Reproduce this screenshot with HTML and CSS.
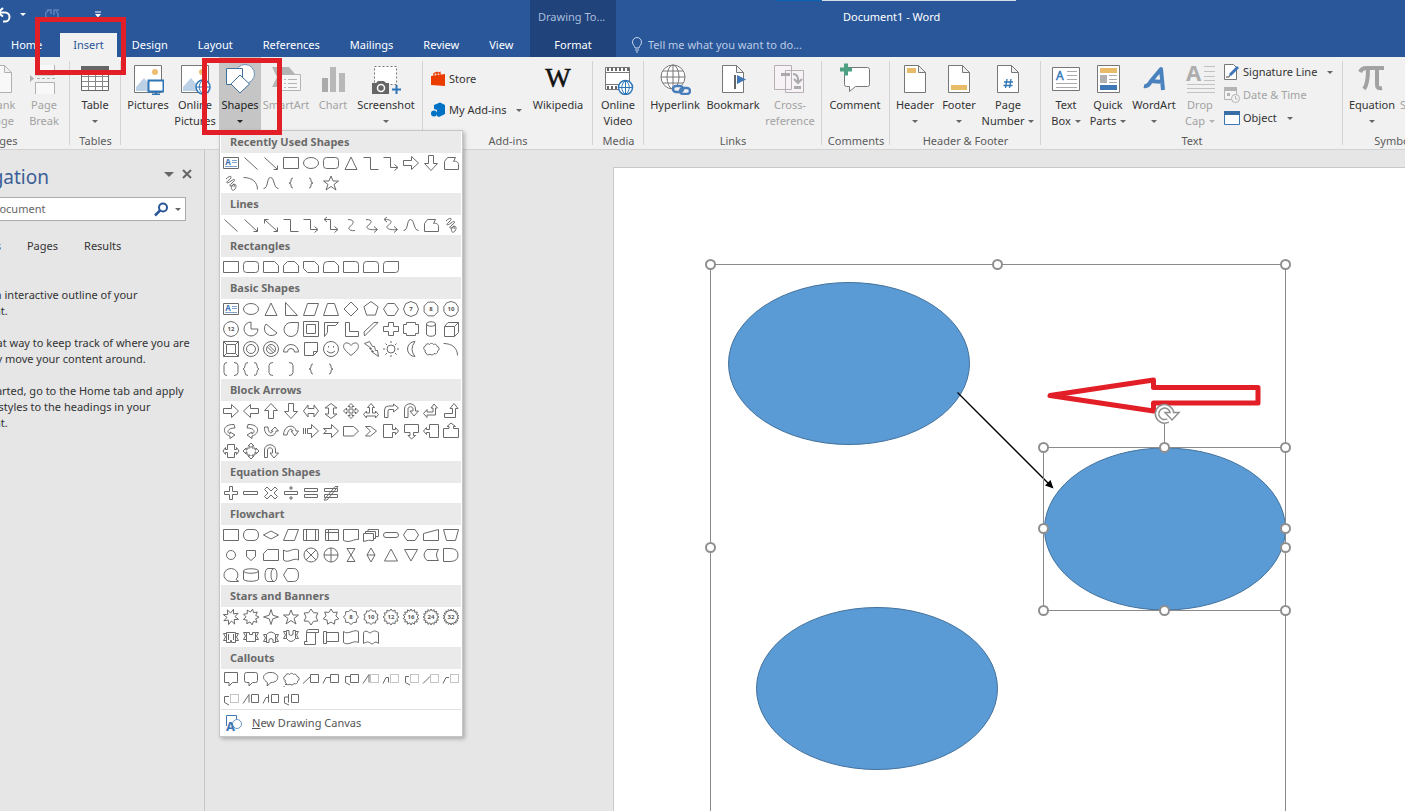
FILE: index.html
```html
<!DOCTYPE html>
<html lang="en">
<head>
<meta charset="utf-8">
<title>Document1 - Word</title>
<link rel="stylesheet" href="styles.css">
</head>
<body>
<header class="top">
  <div class="top-left">
    <div class="qat">
      <button class="qat-btn undo" aria-label="Undo"><svg width="16" height="16" viewBox="0 0 16 16"><path d="M7 1L2 5.500l5 4M2 5.500h7a4.500 4.500 0 0 1 0 9H7" fill="none" stroke="#fff" stroke-width="2"/></svg></button>
      <i class="caret light"></i>
      <button class="qat-btn redo" aria-label="Repeat"><svg width="16" height="16" viewBox="0 0 16 16"><path d="M6 3a5 5 0 0 0-1 10M9 13a5 5 0 0 0 2-9M9 8V3h5M2 3h4v4" fill="none" stroke="#5f81ba" stroke-width="1.500"/></svg></button>
      <button class="qat-btn more" aria-label="Customize"><svg width="8" height="8" viewBox="0 0 8 8"><path d="M1 1h6" stroke="#fff"/><path d="M1 3h6L4 6.500z" fill="#fff"/></svg></button>
    </div>
    <nav class="tabs">
      <button class="tab home">Home</button><button class="tab active">Insert</button><button class="tab">Design</button><button class="tab">Layout</button><button class="tab">References</button><button class="tab">Mailings</button><button class="tab">Review</button><button class="tab">View</button>
    </nav>
  </div>
  <div class="context">
    <span class="context-title">Drawing To...</span>
    <button class="tab">Format</button>
  </div>
  <div class="top-right">
    <div class="doc-title">Document1 - Word</div>
    <label class="tell">
      <svg width="12" height="16" viewBox="0 0 12 16"><path d="M4 11C4 9 1.500 8 1.500 5a4.500 4.500 0 0 1 9 0c0 3-2.500 4-2.500 6zM4 13h4M5 15h2" fill="none" stroke="#c9d6ec"/></svg>
      <input type="text" placeholder="Tell me what you want to do..." aria-label="Tell me what you want to do">
    </label>
  </div>
</header>

<section class="ribbon" aria-label="Insert">
  <div class="group g-pages">
    <div class="cmds">
      <button class="cmd w40 off"><svg class="ico" viewBox="0 0 32 32"><path d="M6.500 2.500h13l7 7v20h-20zM19.500 2.500v7h7" fill="#f8f8f8" stroke="#b0b0b0"/></svg><span>Blank<br>Page</span></button>
      <button class="cmd w46 off"><svg class="ico" viewBox="0 0 32 32"><path d="M7.500 2v10h19V2M7.500 31V19.500h19V31" fill="#f8f8f8" stroke="#b0b0b0"/><path d="M9 15.500h20" stroke="#b0b0b0" stroke-dasharray="3 2"/><path d="M2 12l4 3.500L2 19z" fill="#b0b0b0"/></svg><span>Page<br>Break</span></button>
    </div>
    <div class="group-name">Pages</div>
  </div>
  <div class="group g-51">
    <div class="cmds">
      <button class="cmd w50"><svg class="ico" viewBox="0 0 32 32"><path d="M2.500 3.500h27v24h-27z" fill="#fff" stroke="#666"/><path d="M2 3h28v5H2z" fill="#666"/><path d="M3 13.500h26M3 18.500h26M3 23.500h26M9.500 8v19M16.500 8v19M23.500 8v19" stroke="#888" fill="none"/></svg><span>Table</span><i class="caret"></i></button>
    </div>
    <div class="group-name">Tables</div>
  </div>
  <div class="group g-302 pad4">
    <div class="cmds">
      <button class="cmd w46"><svg class="ico" viewBox="0 0 32 32"><path d="M2.500 2.500h27v27h-27z" fill="#fff" stroke="#777"/><path d="M4 28V24l8-9 7 8v5z" fill="#bcd0e6"/><circle cx="23" cy="9" r="3" fill="#ecbe72"/><path d="M16.500 17.500h15v11h-15z" fill="#fff" stroke="#2e75b6" stroke-width="2"/><path d="M20 31.500h8M24 29v3" stroke="#2e75b6" stroke-width="2"/></svg><span>Pictures</span></button>
      <button class="cmd w48"><svg class="ico" viewBox="0 0 32 32"><path d="M2.500 2.500h27v27h-27z" fill="#fff" stroke="#777"/><path d="M4 28V24l8-9 7 8v5z" fill="#bcd0e6"/><circle cx="23" cy="9" r="3" fill="#ecbe72"/><circle cx="24" cy="24" r="7" fill="#fff" stroke="#2e75b6" stroke-width="1.500"/><path d="M17 24h14M24 17v14M24 17c-5 4-5 10 0 14c5-4 5-10 0-14" fill="none" stroke="#2e75b6"/></svg><span>Online<br>Pictures</span></button>
      <button class="cmd w42 pressed"><svg class="ico" viewBox="0 0 32 32"><circle cx="21" cy="11" r="9.500" fill="#fff" stroke="#6c94bd"/><path d="M2.500 5.500h16v16h-16z" fill="#fff" stroke="#3f719f"/><path d="M16 12l9.500 9L16 30l-9-9z" fill="#fff" stroke="#3f719f"/></svg><span>Shapes</span><i class="caret dark"></i></button>
      <button class="cmd w50 off"><svg class="ico" viewBox="0 0 32 32"><path d="M2 4h17l6 7h-6l-6 6-4 7H2l5-10z" fill="#b4b4b4"/><path d="M10.500 11.500h20v16h-20z" fill="#f6f6f6" stroke="#b4b4b4"/><path d="M14 16.500h2m2 0h9m-13 4h2m2 0h9m-13 4h2m2 0h9" stroke="#b4b4b4"/></svg><span>SmartArt</span></button>
      <button class="cmd w44 off"><svg class="ico" viewBox="0 0 32 32"><path d="M5 15h6v14H5z" fill="#aaa"/><path d="M13 4h6v25h-6zM22 10h6v19h-6z" fill="#b8b8b8"/></svg><span>Chart</span></button>
      <button class="cmd w62"><svg class="ico" viewBox="0 0 32 32"><path d="M4.500 3.500h22v18h-22z" fill="#fff" stroke="#777" stroke-dasharray="2 2"/><path d="M2 20h4l2-2h6l2 2h3v11H2z" fill="#666"/><circle cx="11" cy="25" r="3.500" fill="#666" stroke="#fff" stroke-width="1.500"/><path d="M22 26.500h9M26.500 22v9" stroke="#2e75b6" stroke-width="2"/></svg><span>Screenshot</span><i class="caret"></i></button>
    </div>
    <div class="group-name"></div>
  </div>
  <div class="group g-addins pad4">
    <div class="cmds">
      <div class="stack two w102">
        <button class="row"><svg width="16" height="16" viewBox="0 0 16 16"><path d="M1 5l14-2v12L1 14z" fill="#eb3c00"/><path d="M4 6V2.500l3-1V5M7 2.500l3-1V5" fill="none" stroke="#eb3c00" stroke-width="1.300"/></svg>Store</button>
        <button class="row"><svg width="16" height="16" viewBox="0 0 16 16"><path d="M4 3l6-2.500L15 3v9l-6 3-2-1V8L4 7z" fill="#0072c6"/><circle cx="4" cy="11.500" r="3" fill="#0072c6"/></svg>My Add-ins<i class="caret"></i></button>
      </div>
      <button class="cmd w58"><svg class="ico" viewBox="0 0 32 32"><text x="16" y="24" text-anchor="middle" class="wiki">W</text></svg><span>Wikipedia</span></button>
    </div>
    <div class="group-name">Add-ins</div>
  </div>
  <div class="group g-51">
    <div class="cmds">
      <button class="cmd w50"><svg class="ico" viewBox="0 0 32 32"><path d="M3.500 4.500h24v22h-24z" fill="#fff" stroke="#777"/><path d="M5 6.500h22M5 24.500h13" stroke="#666" stroke-width="3" stroke-dasharray="2 2"/><path d="M3 9.500h25M3 21.500h15" stroke="#777"/><circle cx="23.500" cy="24.500" r="7" fill="#fff" stroke="#2e75b6" stroke-width="1.500"/><path d="M16.500 24.500h14M23.500 17.500v14M23.500 17.500c-5 4-5 10 0 14c5-4 5-10 0-14" fill="none" stroke="#2e75b6"/></svg><span>Online<br>Video</span></button>
    </div>
    <div class="group-name">Media</div>
  </div>
  <div class="group g-links pad2">
    <div class="cmds">
      <button class="cmd w58"><svg class="ico" viewBox="0 0 32 32"><g fill="none" stroke="#777"><circle cx="14" cy="14" r="12" fill="#fff"/><ellipse cx="14" cy="14" rx="6" ry="12"/><path d="M2 14h24M14 2v24M4 8h20M4 20h20"/></g><path d="M14 22h18v10H14z" fill="#f1f1f1"/><g fill="none" stroke="#4a7ebb" stroke-width="2.500"><rect x="14" y="23" width="10" height="6" rx="3"/><rect x="21" y="25" width="10" height="6" rx="3"/></g></svg><span>Hyperlink</span></button>
      <button class="cmd w58"><svg class="ico" viewBox="0 0 32 32"><path d="M5.500 2.500h14l7 7v20h-21zM19.500 2.500v7h7" fill="#fff" stroke="#777"/><path d="M18 12v14" stroke="#666" stroke-width="2"/><path d="M20 12l9 4.500-9 4.500z" fill="#3f76b5"/></svg><span>Bookmark</span></button>
      <button class="cmd w56 off"><svg class="ico" viewBox="0 0 32 32"><path d="M11.500 7.500h18v22h-18zM.5 2.500h17v24H.5z" fill="#f6f2f6" stroke="#b6b0b6"/><path d="M7 11.500h9M20 24.500h7" stroke="#aaa" stroke-width="3"/><path d="M19 11q6 0 5 9m-4-4l4 4 4-4" fill="none" stroke="#aaa" stroke-width="2"/></svg><span>Cross-<br>reference</span></button>
    </div>
    <div class="group-name">Links</div>
  </div>
  <div class="group g-68">
    <div class="cmds">
      <button class="cmd w66"><svg class="ico" viewBox="0 0 32 32"><path d="M5.500 4.500h23q2 0 2 2v15q0 2-2 2h-12l-6 5v-5h-3q-2 0-2-2z" fill="#fff" stroke="#777"/><path d="M1 6.500h12M7 .5v12" stroke="#4f9f83" stroke-width="4"/></svg><span>Comment</span></button>
    </div>
    <div class="group-name">Comments</div>
  </div>
  <div class="group g-151 pad2">
    <div class="cmds">
      <button class="cmd w46"><svg class="ico" viewBox="0 0 32 32"><path d="M5.500 2.500h14l7 7v20h-21zM19.500 2.500v7h7" fill="#fff" stroke="#777"/><path d="M8 5h9v5H8z" fill="#e8bb69"/></svg><span>Header</span><i class="caret"></i></button>
      <button class="cmd w42"><svg class="ico" viewBox="0 0 32 32"><path d="M5.500 2.500h14l7 7v20h-21zM19.500 2.500v7h7" fill="#fff" stroke="#777"/><path d="M8 22h16v5H8z" fill="#e8bb69"/></svg><span>Footer</span><i class="caret"></i></button>
      <button class="cmd w56"><svg class="ico" viewBox="0 0 32 32"><path d="M5.500 2.500h14l7 7v20h-21zM19.500 2.500v7h7" fill="#fff" stroke="#777"/><path d="M15 16l-1.500 9M19 16l-1.500 9M12 19h9M11.500 22.500h9" fill="none" stroke="#2e75b6" stroke-width="1.300"/></svg><span>Page<br>Number<i class="caret inl"></i></span></button>
    </div>
    <div class="group-name">Header &amp; Footer</div>
  </div>
  <div class="group g-302 pad4">
    <div class="cmds">
      <button class="cmd w42"><svg class="ico" viewBox="0 0 32 32"><path d="M2.500 4.500h27v23h-27z" fill="#fff" stroke="#777"/><text x="6" y="17" class="ico-a">A</text><path d="M17 8.500h10M17 12.500h10M17 16.500h10M6 20.500h21M6 24.500h21" stroke="#aaa"/></svg><span>Text<br>Box<i class="caret inl"></i></span></button>
      <button class="cmd w42"><svg class="ico" viewBox="0 0 32 32"><path d="M5.500 2.500h22v27h-22z" fill="#fff" stroke="#777"/><path d="M8 5h17v5H8z" fill="#e8bb69"/><path d="M8 22h17v5H8z" fill="#3f76b5"/><path d="M8 12h7v8H8z" fill="#b0b0b0"/><path d="M17 12.500h8M17 16.500h8M17 19.500h8" stroke="#aaa"/></svg><span>Quick<br>Parts<i class="caret inl"></i></span></button>
      <button class="cmd w50"><svg class="ico" viewBox="0 0 32 32"><path d="M6 23q4 1 7-5L23 6l2 21M12 18l14 1" fill="none" stroke="#4a82bd" stroke-width="4" stroke-linejoin="round"/></svg><span>WordArt</span><i class="caret"></i></button>
      <button class="cmd w42 off"><svg class="ico" viewBox="0 0 32 32"><text x="2" y="18" class="drop-a">A</text><path d="M20 3.500h11M20 8.500h11M20 13.500h11M20 17.500h11M3 21.500h28M3 25.500h28M3 29.500h28" stroke="#c2c2c2"/></svg><span>Drop<br>Cap<i class="caret inl"></i></span></button>
      <div class="stack three">
        <button class="row"><svg width="16" height="16" viewBox="0 0 16 16"><path d="M.5.5h9l3 3v12H.5z" fill="#fff" stroke="#777"/><path d="M6 11l8-8" stroke="#3f76b5" stroke-width="3"/><path d="M2 13h3l1-2" stroke="#444" fill="none"/></svg>Signature Line<i class="caret"></i></button>
        <button class="row off"><svg width="16" height="16" viewBox="0 0 16 16"><path d="M.5.500h12v12H.5z" fill="#f4f4f4" stroke="#b4b4b4"/><path d="M0 0h13v4H0zM3 6h3v3H3z" fill="#b4b4b4"/><circle cx="11.500" cy="11.500" r="4" fill="#f4f4f4" stroke="#b4b4b4"/><path d="M11.500 9v3h2" fill="none" stroke="#b4b4b4"/></svg>Date &amp; Time</button>
        <button class="row"><svg width="16" height="16" viewBox="0 0 16 16"><path d="M.5 1.500h15v13H.5z" fill="#fff" stroke="#3f76b5"/><path d="M0 1h16v4H0z" fill="#3a6ea5"/></svg>Object<i class="caret"></i></button>
      </div>
    </div>
    <div class="group-name">Text</div>
  </div>
  <div class="group g-symbols pad2">
    <div class="cmds">
      <button class="cmd w54"><svg class="ico" viewBox="0 0 32 32"><path d="M4 9q2-4 6-4h18M12 6q0 15-4 20M21 6v16q0 4 5 3" fill="none" stroke="#a2a2a2" stroke-width="4"/></svg><span>Equation</span><i class="caret"></i></button>
      <button class="cmd w50 off sym"><svg class="ico" viewBox="0 0 32 32"></svg><span>Symbol</span></button>
    </div>
    <div class="group-name">Symbols</div>
  </div>
</section>

<main class="work">
  <aside class="nav-pane">
    <div class="nav-inner">
      <div class="nav-head"><h2>Navigation</h2><i class="caret big"></i><button class="close" aria-label="Close"><svg width="10" height="10" viewBox="0 0 10 10"><path d="M1 1l8 8M9 1L1 9" stroke="#666" stroke-width="2"/></svg></button></div>
      <div class="search">
        <input type="text" placeholder="Search document" aria-label="Search document">
        <svg width="15" height="15" viewBox="0 0 15 15"><circle cx="9" cy="5.500" r="4" fill="none" stroke="#2b579a" stroke-width="2"/><path d="M6 8.500L1 13.500" stroke="#2b579a" stroke-width="2.500"/></svg>
        <i class="caret"></i>
      </div>
      <div class="nav-tabs"><button>Headings</button><button>Pages</button><button>Results</button></div>
      <p>Create an interactive outline of your<br>document.</p>
      <p>It's a great way to keep track of where you are<br>or quickly move your content around.</p>
      <p>To get started, go to the Home tab and apply<br>Heading styles to the headings in your<br>document.</p>
    </div>
  </aside>
  <div class="canvas-area">
    <div class="page">
      <svg class="drawing" width="792" height="644" viewBox="613 167 792 644">
        <g fill="#5b9bd5" stroke="#41719c">
          <ellipse cx="849" cy="363.500" rx="120.500" ry="81"/>
          <ellipse cx="877" cy="688.500" rx="120.500" ry="81"/>
          <ellipse cx="1165" cy="529" rx="120.500" ry="81"/>
        </g>
        <path d="M957.500 392.500L1049 484" stroke="#000" stroke-width="1.300"/>
        <path d="M1053.500 488.500l-8.500-3 5.500-5.500z"/>
        <path d="M1050 395.500L1153.500 380v7.500H1258v15.500H1153.500v8z" fill="#fff" stroke="#e21f26" stroke-width="5" stroke-linejoin="round"/>
        <g fill="none" stroke="#8a8a8a">
          <path d="M710.500 820V264.500h575V820M1043.500 447.500h242v163h-242zM1164.500 447V424"/>
        </g>
        <g fill="#fff" stroke="#8f8f8f" stroke-width="2">
          <circle cx="710.500" cy="264.500" r="4.500"/><circle cx="997.500" cy="264.500" r="4.500"/><circle cx="1285.500" cy="264.500" r="4.500"/>
          <circle cx="710.500" cy="547.500" r="4.500"/><circle cx="1285.500" cy="547.500" r="4.500"/>
          <circle cx="1043.500" cy="447.500" r="4.500"/><circle cx="1164.500" cy="447.500" r="4.500"/><circle cx="1285.500" cy="447.500" r="4.500"/>
          <circle cx="1043.500" cy="528.500" r="4.500"/><circle cx="1285.500" cy="528.500" r="4.500"/>
          <circle cx="1043.500" cy="610.500" r="4.500"/><circle cx="1164.500" cy="610.500" r="4.500"/><circle cx="1285.500" cy="610.500" r="4.500"/>
        </g>
        <circle cx="1164.500" cy="414" r="9" fill="#fff"/>
        <g fill="none">
          <path d="M1168 420.500a7.500 7.500 0 1 1 4-7.500" stroke="#8f8f8f" stroke-width="5"/>
          <path d="M1165 412.500h14l-7 7.500z" fill="#fff" stroke="#8f8f8f" stroke-width="1.500"/>
          <path d="M1168 420.500a7.500 7.500 0 1 1 4-7.500v3" stroke="#fff" stroke-width="2"/>
        </g>
      </svg>
    </div>
  </div>
</main>

<div class="menu" id="shapes-menu">
  <div id="gallery"></div>
  <button class="menu-item"><svg width="18" height="18" viewBox="0 0 18 18"><path d="M1.500 12V1.500h10V5" fill="none" stroke="#3f76b5"/><circle cx="12" cy="10" r="4.500" fill="#fff" stroke="#6c94bd"/><text x="1" y="16.500" class="canvas-a">A</text></svg><span><u>N</u>ew Drawing Canvas</span></button>
</div>
<div class="mark mark-tab"></div>
<div class="mark mark-shapes"></div>
<script src="gallery.js"></script>
</body>
</html>
```
FILE: styles.css
```css
* { box-sizing: border-box; }
body {
  margin: 0;
  height: 100vh;
  overflow: hidden;
  position: relative;
  display: flex;
  flex-direction: column;
  background: #e6e6e6;
  color: #333;
  font: 11px/16px "Noto Sans", "Open Sans", sans-serif;
}
button, input {
  font: inherit;
  color: inherit;
  background: none;
  border: 0;
  padding: 0;
  margin: 0;
  outline: 0;
}
button { white-space: nowrap; }
svg { display: block; flex: none; }

.caret {
  display: inline-block;
  flex: none;
  border: 3px solid transparent;
  border-top-color: #666;
  border-bottom: 0;
}
.caret.light { border-top-color: #fff; }
.caret.dark { border-top-color: #222; }
.caret.big { border-width: 5px 5px 0; }
.caret.inl { margin-left: 4px; vertical-align: 2px; }
.off .caret { border-top-color: #b4b4b4; }

/* title bar and tabs */
.top { display: flex; height: 57px; flex: none; background: #2a579a; color: #fff; }
.top-left { width: 530px; flex: none; }
.qat { display: flex; align-items: center; height: 33px; padding-bottom: 4px; }
.undo { margin-left: -4px; }
.qat .caret { margin-left: 8px; }
.redo { margin-left: 19px; }
.more { margin-left: 33px; }
.tabs { display: flex; height: 24px; }
.tab { height: 24px; padding: 0 15px; }
.tab.home { padding: 0 18px 0 11px; }
.tab.active { padding: 0 13px; background: #f1f1f1; color: #2a579a; }
.context {
  width: 86px;
  flex: none;
  background: #20437b;
  display: flex;
  flex-direction: column;
  justify-content: space-between;
}
.context-title { padding: 9px 8px 0; color: #a9bddd; white-space: nowrap; }
.top-right {
  flex: 1;
  background:
    linear-gradient(#d5deec, #d5deec) 206px 0 / 194px 1px no-repeat,
    linear-gradient(#0a64b4, #0a64b4) 160px 0 / 46px 1px no-repeat;
}
.doc-title { height: 33px; line-height: 33px; padding-left: 227px; }
.tell { display: flex; align-items: center; gap: 5px; height: 24px; padding-left: 15px; }
.tell input { width: 200px; }
.tell input::placeholder { color: #bccbe4; opacity: 1; }

/* ribbon */
.ribbon {
  display: flex;
  flex: none;
  height: 93px;
  overflow: hidden;
  background: #f1f1f1;
  border-bottom: 1px solid #d2d2d2;
}
.group {
  flex: none;
  display: flex;
  flex-direction: column;
  justify-content: space-between;
  background: linear-gradient(#d4d4d4, #d4d4d4) right 4px / 1px 84px no-repeat;
}
.g-pages { width: 136px; margin-left: -66px; }
.g-pages .cmds { justify-content: flex-end; padding-right: 3px; }
.g-51 { width: 51px; }
.g-68 { width: 68px; }
.g-151 { width: 151px; }
.g-addins { width: 170px; }
.g-links { width: 178px; }
.g-302 { width: 302px; }
.g-symbols { width: 106px; }
.pad2 .cmds { padding-left: 2px; }
.pad4 .cmds { padding-left: 4px; }
.cmds { display: flex; height: 75px; }
.cmd {
  flex: none;
  display: flex;
  flex-direction: column;
  align-items: center;
  padding-top: 6px;
  height: 73px;
}
.cmd > .caret { margin-top: 7px; }
.cmd.pressed { background: #c5c5c5; color: #222; }
.cmd.sym { align-items: flex-start; padding-left: 1px; }
.ico { width: 32px; height: 32px; margin-bottom: 2px; }
.off { color: #a3a3a3; }
.w40 { width: 40px; }
.w42 { width: 42px; }
.w44 { width: 44px; }
.w46 { width: 46px; }
.w48 { width: 48px; }
.w50 { width: 50px; }
.w54 { width: 54px; }
.w56 { width: 56px; }
.w58 { width: 58px; }
.w62 { width: 62px; }
.w66 { width: 66px; }
.w102 { width: 102px; }
.group-name { height: 16px; text-align: center; color: #5c5c5c; }
.stack { display: flex; flex-direction: column; align-items: flex-start; }
.stack.two { gap: 15px; padding: 14px 0 0 3px; }
.stack.three { gap: 7px; padding: 7px 0 0 3px; }
.row { display: flex; align-items: center; gap: 3px; height: 16px; }
.row .caret { margin-left: 7px; }
.wiki { font: 27px "Liberation Serif", serif; fill: #111; stroke: #111; stroke-width: .5px; }
.ico-a { font: 12px "Noto Sans", sans-serif; fill: #2e75b6; stroke: #2e75b6; stroke-width: .4px; }
.drop-a { font: bold 22px "Noto Sans", sans-serif; fill: #adadad; }
.canvas-a { font: bold 13px "Noto Sans", sans-serif; fill: #3f76b5; }

/* workspace */
.work { flex: 1; display: flex; min-height: 0; }
.nav-pane { width: 205px; flex: none; overflow: hidden; border-right: 1px solid #c6c6c6; }
.nav-inner { margin-left: -48px; }
.nav-head { display: flex; align-items: center; padding: 14px 12px 0 0; height: 40px; }
.nav-head h2 { margin: 0; flex: 1; font-size: 19px; line-height: 26px; font-weight: 400; color: #3b6097; }
.nav-head .caret { margin-bottom: 6px; }
.close { margin: 0 0 6px 8px; }
.search {
  display: flex;
  align-items: center;
  height: 24px;
  margin: 7px 18px 17px 0;
  padding-right: 4px;
  background: #fff;
  border: 1px solid #ababab;
}
.search input { flex: 1; min-width: 0; padding-left: 2px; }
.search input::placeholder { color: #666; opacity: 1; }
.search .caret { margin-left: 6px; }
.nav-tabs { display: flex; gap: 26px; margin-bottom: 33px; }
.nav-tabs button { line-height: 16px; }
.nav-inner p { margin: 0 0 16px; white-space: nowrap; }
.canvas-area { flex: 1; min-width: 0; padding: 17px 0 0 408px; display: flex; }
.page { flex: 1; min-width: 0; overflow: hidden; position: relative; background: #fff; box-shadow: inset 1px 1px #c9c9c9; }
.drawing { position: absolute; left: 0; top: 0; }

/* shapes menu */
.menu {
  position: absolute;
  left: 219px;
  top: 130px;
  width: 244px;
  padding: 0 1px;
  background: #fff;
  border: 1px solid #c6c6c6;
  box-shadow: 2px 2px 4px rgba(0, 0, 0, .25);
}
.menu h3 {
  margin: 0;
  height: 22px;
  padding-left: 9px;
  font-size: 11px;
  line-height: 21px;
  font-weight: 700;
  color: #6a6a6a;
  background: #eaeaea;
}
.shapes { display: grid; grid-template-columns: repeat(12, 20px); }
.shapes button { width: 20px; height: 20px; }
.shapes path { fill: none; stroke: #6a6a6a; }
.shapes .dots { stroke: #8a8a8a; stroke-dasharray: 1 1; }
.shapes .accent { stroke: #7fa3cc; }
.shapes text { font: bold 6px "Noto Sans", sans-serif; fill: #555; text-anchor: middle; }
.shapes .blue { font-size: 8px; fill: #3f76b5; }
.menu-item {
  display: flex;
  align-items: center;
  gap: 9px;
  width: 100%;
  height: 27px;
  padding-left: 4px;
  color: #555;
  border-top: 1px solid #e0e0e0;
}

/* highlight frames */
.mark { position: absolute; border: 5px solid #e21f26; }
.mark-tab { left: 35px; top: 17px; width: 91px; height: 58px; }
.mark-shapes { left: 202px; top: 58px; width: 80px; height: 77px; }
```
FILE: gallery.js
```
// Each shape is drawn in a 20 x 20 cell: [path, text, dotted path]
function star(n, outer, inner, turn) {
  let d = '';
  for (let i = 0; i < n * 2; i++) {
    const r = i % 2 ? inner : outer;
    const a = Math.PI * i / n - Math.PI / 2 + (turn || 0);
    d += (i ? 'L' : 'M') + (10 + r * Math.cos(a)).toFixed(1) + ' ' + (10 + r * Math.sin(a)).toFixed(1);
  }
  return d + 'z';
}
function poly(n, r, turn) {
  let d = '';
  for (let i = 0; i < n; i++) {
    const a = 2 * Math.PI * i / n - Math.PI / 2 + (turn || 0);
    d += (i ? 'L' : 'M') + (10 + r * Math.cos(a)).toFixed(1) + ' ' + (10 + r * Math.sin(a)).toFixed(1);
  }
  return d + 'z';
}
function circle(r) {
  return `M${10 - r} 10a${r} ${r} 0 1 0 ${2 * r} 0a${r} ${r} 0 1 0-${2 * r} 0`;
}

const box = 'M2.5 4.5h15v11h-15z';
const line = 'M3.5 4.500l13 12';
const lineArrow = line + 'm0-4v4h-4';
const lineDouble = lineArrow + 'M3.5 8.500v-4h4';
const oval = 'M2.5 10a7.500 5.500 0 1 0 15 0a7.500 5.500 0 1 0-15 0';
const round = 'M5.5 4.500h9q3 0 3 3v5q0 3-3 3h-9q-3 0-3-3v-5q0-3 3-3z';
const triangle = 'M10 4l6 12.500h-12z';
const elbow = 'M2.5 4.500h7v12h8';
const elbowArrow = 'M2.5 4.500h7v10h7m-3-3l3.500 3-3.500 3';
const elbowDouble = 'M3.500 4.500h6v10h7m-3-3l3.500 3-3.500 3M6 2L3 4.500l3 2.500';
const curve1 = 'M7 4.500c8 0 5 5 2 7s0 5 5 4';
const curve2 = 'M5 4.500c8 0 5 4 2 6s0 5 9 4m-3-3l3.500 3-3.500 3';
const curve3 = 'M4 4.500c9 0 6 4 3 6s0 5 9 4m-3-3l3.500 3-3.500 3M6 2L3 4.500l3 2.500';
const right = 'M2.5 7.500h8v-4l7 6.500-7 6.500v-4h-8z';
const left = 'M17.500 7.500h-8v-4l-7 6.500 7 6.500v-4h8z';
const up = 'M7.500 17.500v-8h-4l6.500-7 6.500 7h-4v8z';
const down = 'M7.500 2.500v8h-4l6.500 7 6.500-7h-4v-8z';
const freeform = 'M3.5 16.500v-8l3-4h8l-2 4c3-1 5 1 5 3v5z';
const scribble = 'M5 6c5-5 7-2 3 1s-2 4 2 1 5-1 1 2-2 4 1 2 4 1 2 4-5 0-3-3 3-3 2 1';
const arc = 'M2.5 4.500c9 0 14 5 14 12';
const wave = 'M2.500 15.500c5 0 3-11 7-11s3 11 8 11';
const braceL = 'M12 5q-2 0-2 2v1q0 2-2 2 2 0 2 2v1q0 2 2 2';
const braceR = 'M8 5q2 0 2 2v1q0 2 2 2-2 0-2 2v1q0 2-2 2';
const diamond = 'M10 3l7 7-7 7-7-7z';
const cloud = 'M4.500 11.500a2.300 2.300 0 0 1 0-4.500a2.300 2.300 0 0 1 4-1.500a2.300 2.300 0 0 1 4 0a2.300 2.300 0 0 1 3.500 2a2.300 2.300 0 0 1 .5 4.500a2.300 2.300 0 0 1-3.500 2.500a2.300 2.300 0 0 1-4 .5a2.300 2.300 0 0 1-4-1a1.600 1.600 0 0 1-.5-2.500z';
const star5 = 'M10 3l2 5h5.500l-4.500 3.500 2 5.500-5-3.500-5 3.500 2-5.500-4.500-3.500h5.500z';
const textBox = [box, 'A', ''];
const note1 = 'M9.500 5.500h8v8h-8z';
const note2 = 'M10.500 5.500h7v8h-7z';

const sections = [
  ['Recently Used Shapes', [textBox, [line], [lineArrow], [box], [oval], [round], [triangle], [elbow], [elbowArrow], [right], [down], [freeform],
    [scribble], [arc], [wave], [braceL], [braceR], [star5]]],
  ['Lines', [[line], [lineArrow], [lineDouble], [elbow], [elbowArrow], [elbowDouble], [curve1], [curve2], [curve3], [wave], [freeform], [scribble]]],
  ['Rectangles', [[box], [round], ['M2.500 4.500h11l4 4v7h-15z'], ['M6.500 4.500h7l4 4v7h-15v-7z'], ['M2.500 4.500h11l4 4v7h-11l-4-4z'], ['M6.500 4.500h7l4 4v7h-15v-7q0-4 4-4z'],
    ['M2.500 4.500h12q3 0 3 3v8h-15z'], ['M5.500 4.500h9q3 0 3 3v8h-15v-8q0-3 3-3z'], ['M5.500 4.500h12v8q0 3-3 3h-12v-8q0-3 3-3z']]],
  ['Basic Shapes', [textBox, [oval], [triangle], ['M4.500 3.500v13h12z'], ['M6.500 4.500h11l-4 12h-11z'], ['M6.500 4.500h7l4 12h-15z'], [diamond], [poly(5, 7.5)],
    ['M6.500 4.500h7l4 5.500-4 6.500h-7L2.500 10z'], [poly(8, 7.5), '7'], [poly(8, 7.5, Math.PI / 8), '8'], [poly(10, 7.5), '10'],
    [poly(12, 7.5), '12'], ['M10 3a7 7 0 1 0 7 7h-7z'], ['M5 5a7 7 0 1 0 11 9z'], ['M17.500 3.500H10a7 7 0 1 0 7 7z'], ['M2.500 2.500h15v15h-15zM5.500 5.500h9v9h-9z'],
    ['M3.500 3.500h14l-3 3h-8v7l-3 4z'], ['M4.500 3.500h4v9h9v5h-13z'], ['M3 13L13 3.500h4L3.500 17z'], ['M7.500 3.500h5v4h5v5h-5v4h-5v-4h-5v-5h5z'],
    ['M5.500 3.500h9v2h3v9h-3v2h-9v-2h-3v-9h3z'], ['M5.500 5v10c0 3 9 3 9 0V5c0-3-9-3-9 0s9 3 9 0'], ['M3.500 7.500h10v10h-10zL7 3.500h10.500L13.500 7.500M17.500 3.500v10l-4 4'],
    ['M2.500 2.500h15v15h-15zM5.500 5.500h9v9h-9zM2.500 2.500l3 3M17.500 2.500l-3 3M2.500 17.500l3-3M17.500 17.500l-3-3'], [circle(7.5) + circle(4.5)], [circle(7.5) + circle(4.5) + 'M6.500 8l6 6M8 6.500l6 6'],
    ['M2.500 13a7.500 7.500 0 0 1 15 0h-4a3.500 3.500 0 0 0-7 0z'], ['M3.500 3.500h13v9l-4 4h-9zM16.500 12.500h-4v4'], [circle(7.5) + 'M6 12q4 4 8 0M7.500 7v1.500M12.500 7v1.500'],
    ['M10 16.500C2 10 2 8 3 5.500s5-2 7 1c2-3 6-3.500 7-1s1 4.500-7 11z'], ['M3.500 4.500l5-2 3 5h2l1 4h2l1 6-7-5h2l-4-3h2z'], [circle(4) + 'M10 2v2M10 16v2M2 10h2M16 10h2M4.500 4.500L6 6M14 14l1.500 1.500M15.500 4.500L14 6M6 14l-1.500 1.500'],
    ['M14 2.500a7.500 7.500 0 1 0 0 15q-6-7 0-15z'], [cloud], [arc],
    ['M6 3.500q-3 0-3 3v7q0 3 3 3M13 3.500q4 0 4 3v7q0 3-4 3'], ['M7 3.500q-3 0-3 3 0 3-2 3.500 2 .500 2 3.500 0 3 3 3M13 3.500q3 0 3 3 0 3 2 3.500-2 .500-2 3.500 0 3-3 3'],
    ['M12 3.500q-4 0-4 3v7q0 3 4 3'], ['M8 3.500q4 0 4 3v7q0 3-4 3'], [braceL], [braceR]]],
  ['Block Arrows', [[right], [left], [up], [down], ['M7 4L2.500 10 7 16v-3.500h6V16l4.500-6L13 4v3.500H7z'], ['M4 7l6-4.500L16 7h-3.500v6H16l-6 4.500L4 13h3.500V7z'],
    ['M10 2.500l3 3h-2V9h3.500V7l3 3-3 3v-2H11v3.500h2l-3 3-3-3h2V11H5.500v2l-3-3 3-3v2H9V5.500H7z'], ['M10 2.500l3.500 4h-2V12h3v-2l3 3.500-3 3.500v-2h-9v2l-3-3.500 3-3.500v2h3V6.500h-2z'],
    ['M3.500 16.500V9q0-4 4-4h5V3l5 4-5 4V8.500H8q-1 0-1 2v6z'], ['M3.500 16.500V8c0-7 11-7 11 0v2h3l-4.500 5-4-5h3V8c0-3-5-3-5 0v8.500z'],
    ['M6 8.500l-3.500 4 3.500 4v-2.500h8.500V7h2L13 3 10 7h2v4H6z'], ['M3.500 12.500v4h11v-9h2.500l-4-5-4 5h2.500v5z'],
    ['M13 3.500C1 3 1 13 9 15v2.500l5-3.500-5-3v2C5 11 7 7 14 7z'], ['M7 3.500C19 3 19 13 11 15v2.500L6 14l5-3v2c4-2 2-6-5-6z'],
    ['M3.500 6C3 17 14 17 15 10h2.500L14 6l-4 4h2c-2 4-5 1-5-4z'], ['M2.500 14C3 3 14 3 15 10h2.500L14 15l-4-5h2c-2-4-5-1-6 4z'],
    ['M2.500 7v6M4.500 7v6M6.500 7.500h4v-4l7 6.500-7 6.500v-4h-4z'], ['M2.500 7.500h8v-4l7 6.500-7 6.500v-4h-8l3-2.500z'], ['M2.500 5.500h10l5 4.500-5 5h-10z'], ['M4.500 5.500h5l6 4.500-6 5h-5l5-5z'],
    ['M2.500 3.500h9v5h3v-2l3 3.500-3 3.500v-2h-3v5h-9z'], ['M3.500 3.500h14v8h-5v3h2L10.500 18 7 14.500h2v-3H3.500z'], ['M17.500 3.500h-9v5h-3v-2l-3 3.500 3 3.500v-2h3v5h9z'], ['M2.500 16.500h15v-9h-5v-2h2L10 2 6 5.500h2v2H2.500z'],
    ['M6.500 3.500h7v5h2v-2l2.500 3.500-2.500 3.500v-2h-2v5h-7v-5h-2v2L2 10l2.500-3.500v2h2z'], ['M10 2l3 3h-2v2h3v2h1V7l3 3-3 3v-2h-1v3h-3v1h2l-3 3-3-3h2v-1H6v-3H5v2l-3-3 3-3v2h1V7h3V5H7z'],
    ['M3.500 16.500V9c0-7 11-7 11 0v3h3l-4.500 5-4-5h2.500V9c0-3-5-3-5 0v7.500z']]],
  ['Equation Shapes', [['M8.500 3.500h3v5h5v3h-5v5h-3v-5h-5v-3h5z'], ['M2.500 8.500h14v3h-14z'], ['M6 4l4 4 4-4 2.500 2.500L13 10l3.500 3.500L14 16l-4-4-4 4-2.500-2.500L7 10 3.500 6.500z'],
    ['M3.500 8.500h13v3h-13zM9 4h2v2H9zM9 14h2v2H9z'], ['M3.500 5.500h13v3h-13zM3.500 11.500h13v3h-13z'], ['M3.500 5.500h13v3h-13zM3.500 11.500h13v3h-13zM14 3.500h3L6 17H3z']]],
  ['Flowchart', [[box], ['M7 4.500h6c6 0 6 11 0 11H7c-6 0-6-11 0-11z'], ['M10 6l7.500 4-7.500 4-7.500-4z'], ['M7 4.500h10.500l-4 11h-11z'], [box + 'M5.500 4.500v11M14.500 4.500v11'], ['M4.500 4.500h13v11h-13zM4.500 7.500h13M7.500 4.500v11'],
    ['M2.500 4.500h15v10c-5-1-8 4-15 1z'], ['M2.500 8.500h10v7q-5-1-10 1zM4.500 8.500v-2h10v7h-2M7 6.500v-2h10.500v7h-3'], ['M5 7.500h10q2.500 0 2.500 2.500T15 12.500H5Q2.500 12.500 2.500 10T5 7.500z'],
    ['M6 4.500h8l3.500 5.500-3.500 5.500H6L2.500 10z'], ['M2.500 8.500l15-4v11h-15z'], ['M2.500 4.500h15l-3 11h-9z'],
    [circle(4.5)], ['M5.500 5.500h9v6L10 15.500l-4.500-4z'], ['M6.500 4.500h11v11h-15v-7z'], ['M2.500 5c5 4 9-3 15 0v10c-5-3-10 4-15 0z'], [circle(7) + 'M5 5l10 10M15 5L5 15'], [circle(7) + 'M10 3v14M3 10h14'],
    ['M6 3.500h8l-8 13h8z'], ['M10 3l4 7-4 7-4-7zM6 10h8'], ['M10 4l6.500 12h-13z'], ['M10 16L3.500 4.500h13z'], ['M6 4.500h11.500q-4 5.500 0 11H6q-6-5.500 0-11z'], ['M2.500 3.500H9q8 0 8 6.500t-8 6.500H2.500z'],
    ['M17.500 16.500H10a7 6.500 0 1 1 5-2l3 2'], ['M2.500 6v8c0 3 15 3 15 0V6c0-3-15-3-15 0s15 3 15 0'], ['M7 3.500h6c4 0 4 13 0 13H7c-4 0-4-13 0-13zM13 3.500c-4 0-4 13 0 13'], ['M6.500 3.500h6q5 0 5 6.500t-5 6.500h-6L2.500 10z']]],
  ['Stars and Banners', [[star(8, 8, 4, 0.3)], [star(9, 8, 5, 0.2)], [star(4, 7.5, 2.5)], [star5], [star(6, 8, 5)], [star(7, 8, 5)], [star(8, 7.5, 6), '8'], [star(10, 7.5, 6), '10'],
    [star(12, 8, 6), '12'], [star(14, 8, 6), '16'], [star(16, 8, 6), '24'], [star(18, 8, 6), '32'],
    ['M5.500 13.500h-3l2-3.500-2-3.500h3v-1h9v1h3l-2 3.500 2 3.500h-3M5.500 6v9.500h4v-2h1v2h4V6M7.500 13V7M12.500 13V7'], ['M5.500 5.500h-3l2 3.500-2 3.500h3v2h9v-2h3l-2-3.500 2-3.500h-3M5.500 13V5.500h3v2h3v-2h3V13'], ['M5.500 14.500h-3l2-3.500-2-3.500h3q4.500-5 9 0h3l-2 3.500 2 3.500h-3M5.500 7.500v8h2.500v-3q2-2 4 0v3h2.500v-8'], ['M5.500 4.500h-3l2 3.500-2 3.500h3q4.500 6 9 0h3l-2-3.500 2-3.500h-3M5.500 11.500v-8h2.500v4q2 2 4 0v-4h2.500v8'],
    ['M5.500 14.500v-9q0-3 2-3h10v3h-3v12h-11v-3h3M5.500 5.500h9'], ['M5.500 5.500h12v9h-12zM2.500 4.500h3v12h-3zM5.500 14.500h9'], ['M2.500 4.500c5 4 10-3 15 0v11c-5-3-10 4-15 0z'], ['M2.500 5.500c4-4 5 2 7.500 0s4-2 7.500 0v11c-4-4-5 2-7.500 0s-4-2-7.500 0z']]],
  ['Callouts', [['M3.500 3.500h13v10h-5L8 17v-3.500H3.500z'], ['M5.500 3.500h9q2 0 2 2v6q0 2-2 2h-3L8 17v-3.500H5.500q-2 0-2-2v-6q0-2 2-2z'], ['M6 17l.5-3.500C-2 8 5 3 10 3.500c9 0 9 10 0 10z'], [cloud + 'M4 15.500h2M2.500 17.500h1'],
    [note1 + 'M2 14.500l7.500-7'], [note1 + 'M2 14.500l3-6h4.500'], [note1 + 'M9 7.500H4.500v6L9 16'],
    ['M2 14.500l6-9v8', '', note1], ['M2 14.500l3-6h2.500v5', '', note1], ['M8 7.500H4.500v6L9 16', '', note1], ['M2 14.500l7-7', '', note1], ['M2 14.500l3-6h3', '', note1],
    ['M8 7.500H3.500v6L8 16', '', note1], [note2 + 'M2 14.500l6-9v8'], [note2 + 'M2 14.500l3-6h2.500m0-3v8'], [note2 + 'M7.500 5v8.500M7.500 8H3.500v6L8 16']]]
];

document.getElementById('gallery').innerHTML = sections.map(([name, shapes]) =>
  `<h3>${name}</h3><div class="shapes">` + shapes.map(([d, text, dots]) => {
    let inner = `<path d="${d}"/>`;
    if (text === 'A') inner += '<text class="blue" x="7" y="12">A</text><path class="accent" d="M11 7.500h5M11 9.500h5M4 13.500h12"/>';
    else if (text) inner += `<text x="10" y="12">${text}</text>`;
    if (dots) inner += `<path class="dots" d="${dots}"/>`;
    return `<button type="button"><svg width="20" height="20" viewBox="0 0 20 20">${inner}</svg></button>`;
  }).join('') + '</div>').join('');
```
